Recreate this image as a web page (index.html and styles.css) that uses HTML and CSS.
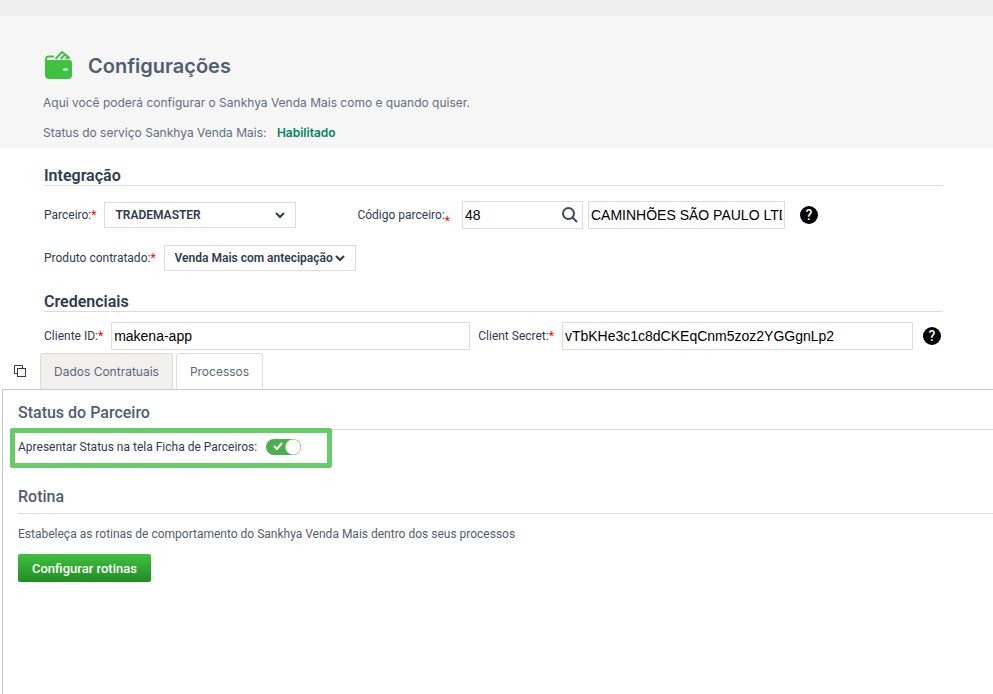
FILE: index.html
```
<!DOCTYPE html>
<html lang="pt-BR">
<head>
  <meta charset="UTF-8" />
  <meta name="viewport" content="width=device-width, initial-scale=1.0"/>
  <title>Configurações</title>
  <link rel="stylesheet" href="styles.css">
</head>
<body>

  <div class="topbar"></div>

  <!-- Header -->
  <header class="header">
    <div class="header-title">
      <svg class="wallet" viewBox="0 0 28 30" width="28" height="30" aria-hidden="true">
        <path d="M0 10h24a3 3 0 0 1 3 3v12a4 4 0 0 1-4 4H4a4 4 0 0 1-4-4z" fill="#41c141"/>
        <path d="M1 12V9a2.500 2.500 0 0 1 2.500-2.500H9" fill="none" stroke="#41c141" stroke-width="2"/>
        <path d="M10.500 9L17 2L24 7.500L23 9M15.500 9L20 4.500M20.500 9L22.500 6.500" fill="none" stroke="#41c141" stroke-width="2" stroke-linejoin="round"/>
        <path d="M19 19.500h3" stroke="#fff" stroke-width="2" stroke-linecap="round"/>
      </svg>
      <h1>Configurações</h1>
    </div>
    <p>Aqui você poderá configurar o Sankhya Venda Mais como e quando quiser.</p>
    <p>Status do serviço Sankhya Venda Mais: <strong>Habilitado</strong></p>
  </header>

  <main>
    <!-- Integração -->
    <section class="section">
      <h2>Integração</h2>
      <div class="row">
        <div class="field field-partner">
          <label for="parceiro">Parceiro:<span class="req">*</span></label>
          <div class="select">
            <select id="parceiro"><option>TRADEMASTER</option></select>
            <svg viewBox="0 0 10 7" width="10" height="7" aria-hidden="true"><path d="M1 1l4 4l4-4"/></svg>
          </div>
        </div>
        <div class="field">
          <label for="codigo">Código parceiro:<span class="req req-low">*</span></label>
          <div class="lookup">
            <div class="search">
              <input type="text" id="codigo" value="48">
              <button type="button" aria-label="Pesquisar">
                <svg viewBox="0 0 16 16" width="16" height="16"><circle cx="6.500" cy="6.500" r="5.500"/><path d="M10.500 10.500l4.500 4.500"/></svg>
              </button>
            </div>
            <input type="text" class="partner-name" value="CAMINHÕES SÃO PAULO LTDA" aria-label="Nome do parceiro">
          </div>
        </div>
        <button type="button" class="help" aria-label="Ajuda">?</button>
      </div>
      <div class="row row-product">
        <div class="field">
          <label for="produto">Produto contratado:<span class="req">*</span></label>
          <div class="select">
            <select id="produto"><option>Venda Mais com antecipação</option></select>
            <svg viewBox="0 0 10 7" width="10" height="7" aria-hidden="true"><path d="M1 1l4 4l4-4"/></svg>
          </div>
        </div>
      </div>
    </section>

    <!-- Credenciais -->
    <section class="section credentials">
      <h2>Credenciais</h2>
      <div class="row">
        <div class="field field-client">
          <label for="cliente">Cliente ID:<span class="req">*</span></label>
          <input type="text" id="cliente" value="makena-app">
        </div>
        <div class="field field-secret">
          <label for="secret">Client Secret:<span class="req">*</span></label>
          <input type="text" id="secret" value="vTbKHe3c1c8dCKEqCnm5zoz2YGGgnLp2">
        </div>
        <button type="button" class="help" aria-label="Ajuda">?</button>
      </div>
    </section>

    <!-- Abas -->
    <div class="tabs">
      <button type="button" class="copy" aria-label="Abrir aba">
        <svg viewBox="0 0 12 12" width="12" height="12"><rect x="3.500" y="3.500" width="8" height="8"/><path d="M3 8.500H.5v-8h8V3"/></svg>
      </button>
      <button type="button" class="tab active">Dados Contratuais</button>
      <button type="button" class="tab">Processos</button>
    </div>

    <div class="panel">
      <h3>Status do Parceiro</h3>
      <div class="highlight">
        <label for="status">Apresentar Status na tela Ficha de Parceiros:</label>
        <span class="switch">
          <input type="checkbox" id="status" checked>
          <svg viewBox="0 0 10 8" width="10" height="8" aria-hidden="true"><path d="M1 4l3 3l5-6"/></svg>
        </span>
      </div>

      <h3>Rotina</h3>
      <p>Estabeleça as rotinas de comportamento do Sankhya Venda Mais dentro dos seus processos</p>
      <button type="button" class="btn">Configurar rotinas</button>
    </div>
  </main>

</body>
</html>
```
FILE: styles.css
```
* {
  margin: 0;
  padding: 0;
  box-sizing: border-box;
}

body {
  display: flex;
  flex-direction: column;
  min-height: 100vh;
  background: #fff;
  color: #2f3b4f;
  font-family: Roboto, sans-serif;
  font-size: 12px;
}

button {
  border: none;
  background: none;
  cursor: pointer;
}

.topbar {
  height: 16px;
  background: #efefef;
}

/* Header */
.header {
  background: #f6f6f6;
  color: #626f80;
  font-family: Inter, sans-serif;
  font-size: 12px;
  line-height: 20px;
  padding: 34px 43px 5px;
}

.header-title {
  display: flex;
  align-items: flex-start;
  gap: 15px;
  padding-left: 2px;
  margin-bottom: 10px;
}

.header h1 {
  font-size: 20px;
  line-height: 33px;
  font-weight: 600;
  color: #515e6e;
}

.header p {
  margin-bottom: 10px;
}

.header p:last-child {
  margin-bottom: 0;
}

.header strong {
  margin-left: 7px;
  font-weight: 600;
  color: #008561;
}

main {
  flex: 1;
  display: flex;
  flex-direction: column;
}

/* Sections */
.section {
  padding: 18px 50px 0 44px;
}

.section h2 {
  font-size: 16px;
  line-height: 19px;
  font-weight: 600;
  border-bottom: 1px solid #dcdcdc;
  margin-bottom: 15px;
}

.credentials {
  padding-top: 20px;
}

.credentials h2 {
  margin-bottom: 10px;
}

.row {
  display: flex;
  align-items: center;
  gap: 8px;
  min-height: 28px;
}

.row-product {
  margin-top: 15px;
}

.field {
  display: flex;
  align-items: center;
  gap: 8px;
}

.field-partner {
  margin-right: 53px;
}

.field-client {
  flex: 50;
}

.field-secret {
  flex: 51;
}

label {
  white-space: nowrap;
}

.req {
  color: #f00;
}

.req-low {
  line-height: 0;
  vertical-align: -6px;
  margin-right: 4px;
}

input[type="text"] {
  height: 28px;
  min-width: 0;
  flex: 1;
  border: 1px solid #dcdcdc;
  padding: 0 2px;
  font-family: "Liberation Sans", Arial, sans-serif;
  font-size: 14px;
  color: #000;
}

.lookup {
  display: flex;
  gap: 5px;
}

input.partner-name {
  flex: none;
  width: 197px;
}

.select {
  position: relative;
}

.select select {
  appearance: none;
  width: 192px;
  height: 26px;
  padding: 0 10px;
  border: 1px solid #dcdcdc;
  border-radius: 0;
  background: #fff;
  color: #2f3b4f;
  font-family: Roboto, sans-serif;
  font-size: 12px;
  font-weight: 600;
}

.select svg {
  position: absolute;
  right: 11px;
  top: 10px;
  fill: none;
  stroke: #2f3b4f;
  stroke-width: 2;
  pointer-events: none;
}

.search {
  position: relative;
  display: flex;
  width: 121px;
}

.search button {
  position: absolute;
  right: 5px;
  top: 6px;
  height: 16px;
}

.search svg {
  display: block;
  fill: none;
  stroke: #3d4a5f;
  stroke-width: 2;
}

.help {
  width: 18px;
  height: 18px;
  margin-left: 7px;
  border-radius: 50%;
  background: #000;
  color: #fff;
  font-family: Roboto, sans-serif;
  font-size: 14px;
  font-weight: 500;
  line-height: 18px;
}

.credentials .help {
  margin: 0 2px;
}

/* Tabs */
.tabs {
  display: flex;
  align-items: flex-end;
  gap: 3px;
  margin-top: 3px;
  padding-left: 14px;
}

.copy {
  align-self: center;
  width: 12px;
  height: 12px;
  margin-right: 11px;
}

.copy svg {
  display: block;
  fill: none;
  stroke: #2f3b4f;
}

.tab {
  height: 36px;
  padding: 0 13px;
  border: 1px solid #dcdcdc;
  border-bottom: none;
  border-radius: 3px 3px 0 0;
  background: #fff;
  color: #5b6878;
  font-family: Inter, sans-serif;
  font-size: 12px;
}

.tab.active {
  background: #f1f0ef;
}

.panel {
  flex: 1;
  margin-left: 2px;
  padding: 10px 0 20px 15px;
  border-top: 1px solid #c8c8c8;
  border-left: 1px solid #c8c8c8;
}

.panel h3 {
  padding-bottom: 3px;
  border-bottom: 1px solid #dcdcdc;
  color: #515e6e;
  font-size: 16px;
  font-weight: 500;
  line-height: 26px;
}

.panel p {
  margin: 12px 0;
  color: #515e6e;
  line-height: 16px;
}

.highlight {
  position: relative;
  display: flex;
  align-items: center;
  gap: 9px;
  width: 322px;
  height: 40px;
  margin: -2px 0 16px -8px;
  padding: 0 0 2px 3px;
  border: 5px solid #66cc66;
  border-radius: 2px;
}

.switch {
  position: relative;
  display: flex;
}

.switch input {
  appearance: none;
  width: 35px;
  height: 16px;
  border-radius: 8px;
  background: radial-gradient(circle at 27px 8px, #fff 7px, #4caf50 8px);
}

.switch svg {
  position: absolute;
  left: 7px;
  top: 3px;
  fill: none;
  stroke: #fff;
  stroke-width: 2;
  pointer-events: none;
}

.btn {
  height: 28px;
  padding: 0 14px;
  border-radius: 2px;
  background: linear-gradient(#41c141, #228b22);
  color: #fff;
  font-family: Roboto, sans-serif;
  font-size: 13px;
  font-weight: 500;
}
```
